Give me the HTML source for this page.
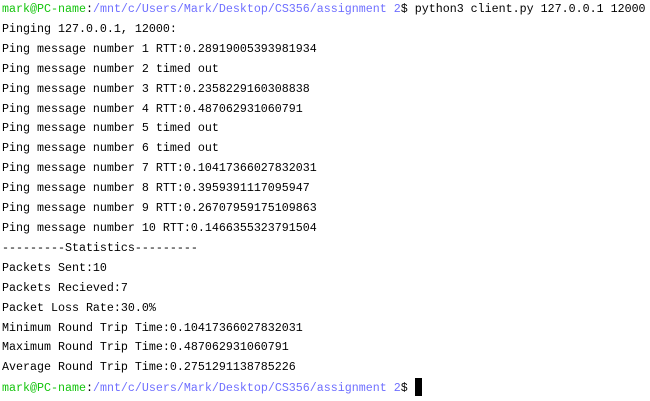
<!DOCTYPE html>
<html><head><style>
html,body{margin:0;padding:0;background:#fff;width:650px;height:401px;overflow:hidden}
pre{margin:0;padding:0;position:absolute;left:2px;top:0;font-family:"Liberation Mono",monospace;font-size:11.67px;line-height:19.9px;color:#000;white-space:pre}
.g{color:#13c40c}.b{color:#6f6fff}
.cur{display:inline-block;width:7px;height:18px;background:#000;vertical-align:-5px}
</style></head><body>
<pre><span class="g">mark@PC-name</span>:<span class="b">/mnt/c/Users/Mark/Desktop/CS356/assignment 2</span>$ python3 client.py 127.0.0.1 12000
Pinging 127.0.0.1, 12000:
Ping message number 1 RTT:0.28919005393981934
Ping message number 2 timed out
Ping message number 3 RTT:0.2358229160308838
Ping message number 4 RTT:0.487062931060791
Ping message number 5 timed out
Ping message number 6 timed out
Ping message number 7 RTT:0.10417366027832031
Ping message number 8 RTT:0.3959391117095947
Ping message number 9 RTT:0.26707959175109863
Ping message number 10 RTT:0.1466355323791504
---------Statistics---------
Packets Sent:10
Packets Recieved:7
Packet Loss Rate:30.0%
Minimum Round Trip Time:0.10417366027832031
Maximum Round Trip Time:0.487062931060791
Average Round Trip Time:0.2751291138785226
<span class="g">mark@PC-name</span>:<span class="b">/mnt/c/Users/Mark/Desktop/CS356/assignment 2</span>$ <span class="cur"></span></pre>
</body></html>
